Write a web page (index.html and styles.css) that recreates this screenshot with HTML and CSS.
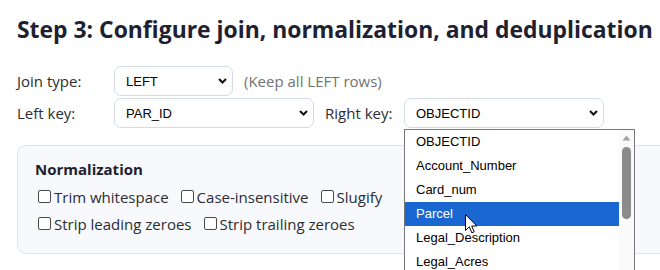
FILE: index.html
```html
<!DOCTYPE html>
<html>
<head>
<meta charset="utf-8">
<link rel="stylesheet" href="styles.css">
</head>
<body>
<div class="page">
  <h2 class="title">Step 3: Configure join, normalization, and deduplication</h2>
  <div class="row">
    <span class="lbl">Join type:</span>
    <div class="sel sel-short"><span>LEFT</span><svg class="chev" width="9" height="6" viewBox="0 0 9 6"><path d="M1 1 L4.5 4.5 L8 1" fill="none" stroke="#111" stroke-width="2"/></svg></div>
    <span class="hint">(Keep all LEFT rows)</span>
  </div>
  <div class="row">
    <span class="lbl">Left key:</span>
    <div class="sel sel-long"><span>PAR_ID</span><svg class="chev" width="9" height="6" viewBox="0 0 9 6"><path d="M1 1 L4.5 4.5 L8 1" fill="none" stroke="#111" stroke-width="2"/></svg></div>
    <span class="lbl2">Right key:</span>
    <div class="sel-wrap">
      <div class="sel sel-long"><span>OBJECTID</span><svg class="chev" width="9" height="6" viewBox="0 0 9 6"><path d="M1 1 L4.5 4.5 L8 1" fill="none" stroke="#111" stroke-width="2"/></svg></div>
      <div class="dropdown">
        <div class="opts">
          <div class="opt">OBJECTID</div>
          <div class="opt">Account_Number</div>
          <div class="opt">Card_num</div>
          <div class="opt hl">Parcel</div>
          <div class="opt">Legal_Description</div>
          <div class="opt">Legal_Acres</div>
        </div>
        <div class="sbar">
          <svg class="up" width="9" height="6" viewBox="0 0 9 6"><path d="M0.5 5.5 L4.5 0.5 L8.5 5.5 Z" fill="#a3a3a3"/></svg>
          <div class="thumb"></div>
        </div>
      </div>
      <svg class="cursor" width="13" height="20" viewBox="0 0 13 20"><path d="M0.5 0.5 L0.5 16.5 L4.3 12.8 L6.8 18.8 L9.2 17.8 L6.7 12 L11.8 12 Z" fill="#fff" stroke="#000" stroke-width="1" stroke-linejoin="miter"/></svg>
    </div>
  </div>
  <div class="panel">
    <div class="panel-title">Normalization</div>
    <div class="checks">
      <label class="chk"><span class="box"></span>Trim whitespace</label>
      <label class="chk"><span class="box"></span>Case-insensitive</label>
      <label class="chk"><span class="box"></span>Slugify</label>
    </div>
    <div class="checks">
      <label class="chk"><span class="box"></span>Strip leading zeroes</label>
      <label class="chk"><span class="box"></span>Strip trailing zeroes</label>
    </div>
  </div>
</div>
</body>
</html>
```
FILE: styles.css
```css
html {
  overflow: hidden;
  background: #fff;
  height: 270px;
}
body {
  margin: 0;
  padding: 0;
  height: 270px;
  font-family: "Open Sans", "Noto Sans", sans-serif;
  font-size: 15px;
  color: #2a2d34;
}
.page {
  width: 700px;
  padding: 15px 17px 0 17px;
}
.title {
  margin: 0 0 21px 0;
  font-size: 22.9px;
  line-height: 30px;
  font-weight: 700;
  color: #1d2130;
  white-space: nowrap;
}
.row {
  display: flex;
  align-items: center;
  height: 30px;
  margin-bottom: 2px;
}
.lbl {
  width: 97px;
  flex: none;
}
.lbl2 {
  margin: 0 11px 0 11px;
  width: 68px;
}
.hint {
  margin-left: 11px;
  color: #727272;
}
.sel {
  box-sizing: border-box;
  height: 30px;
  border: 1px solid #d3dbe8;
  border-radius: 7px;
  background: #fff;
  display: flex;
  align-items: center;
  justify-content: space-between;
  padding: 0 5px 0 11px;
  font-family: "Liberation Sans", Arial, sans-serif;
  font-size: 13px;
  color: #000;
}
.sel-short { width: 119px; }
.sel-long { width: 200px; }
.chev { display: block; }
.sel-wrap {
  position: relative;
}
.dropdown {
  position: absolute;
  left: 0;
  top: 31px;
  width: 231px;
  height: 141px;
  box-sizing: border-box;
  border: 1px solid #767676;
  border-bottom: none;
  background: #fff;
  display: flex;
  overflow: hidden;
  z-index: 5;
}
.opts {
  flex: 1;
}
.opt {
  height: 24px;
  line-height: 24px;
  padding-left: 11px;
  font-family: "Liberation Sans", Arial, sans-serif;
  font-size: 13px;
  color: #000;
}
.opt.hl {
  background: #1a67d2;
  color: #fff;
}
.sbar {
  width: 15px;
  background: #fafafa;
  display: flex;
  flex-direction: column;
  align-items: center;
}
.up {
  margin-top: 5px;
  display: block;
}
.thumb {
  margin-top: 6px;
  width: 9px;
  height: 72px;
  border-radius: 5px;
  background: #8b8b8b;
}
.cursor {
  position: absolute;
  left: 61px;
  top: 116px;
  z-index: 6;
}
.panel {
  margin-top: 17px;
  height: 109px;
  box-sizing: border-box;
  border: 1px solid #dfe4ee;
  border-radius: 9px;
  background: #f8f9fc;
  padding: 13px 17px 0 17px;
}
.panel-title {
  font-weight: 700;
  font-size: 15px;
  line-height: 20px;
  color: #1d2130;
  margin-bottom: 4px;
}
.checks {
  display: flex;
  height: 27px;
  align-items: center;
}
.chk {
  display: flex;
  align-items: center;
  margin-right: 9px;
}
.box {
  box-sizing: border-box;
  width: 13px;
  height: 13px;
  border: 1px solid #4a4a4a;
  border-radius: 2px;
  background: #fff;
  margin: 0 3px 0 3px;
}
```
